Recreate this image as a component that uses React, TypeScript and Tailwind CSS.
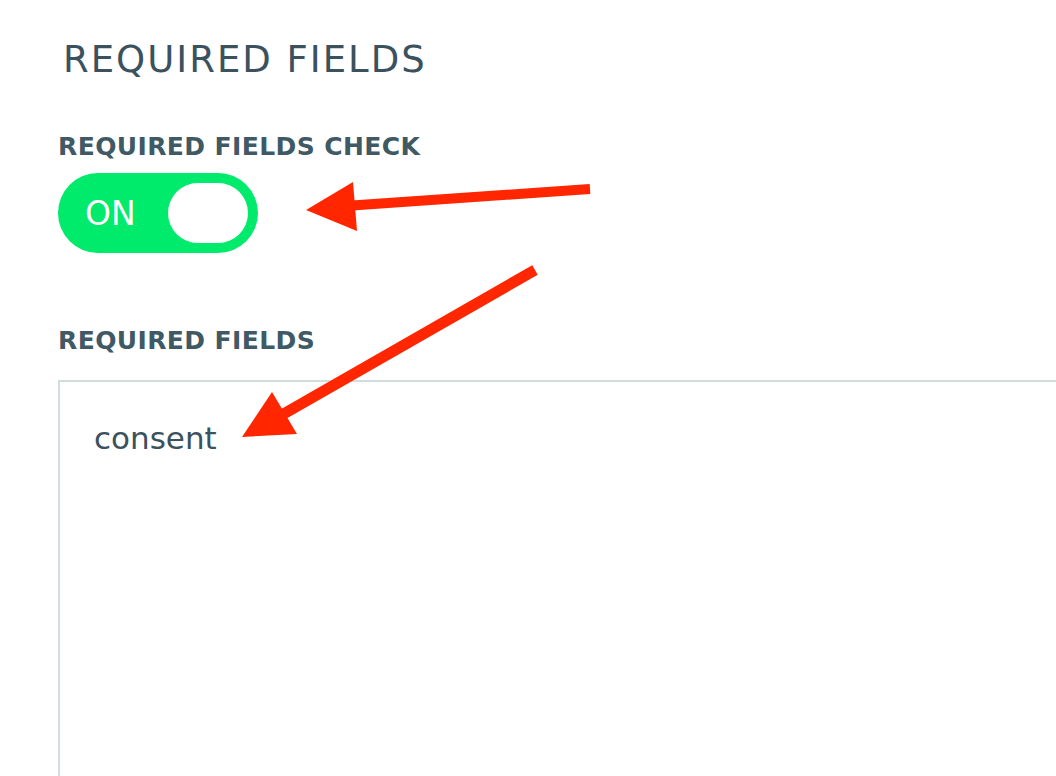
import React from "react";

const font = { fontFamily: '"DejaVu Sans", "Noto Sans", sans-serif' };

export default function App() {
  return (
    <div className="relative h-[776px] w-[1056px] overflow-hidden bg-white" style={font}>
      <div className="flex flex-col pl-[58px] pt-[38px]">
        <h1 className="pl-[5px] text-[37px] font-normal leading-[44px] tracking-[2px] text-[#3b525e]">
          REQUIRED FIELDS
        </h1>
        <div className="mt-[49px] text-[25px] font-bold leading-[32px] tracking-[0.4px] text-[#3f5965]">
          REQUIRED FIELDS CHECK
        </div>
        <div className="mt-[10px] flex h-[80px] w-[200px] items-center justify-between rounded-full bg-[#00ea6b] pl-[27px] pr-[10px]">
          <span className="text-[33px] leading-none text-white">ON</span>
          <span className="h-[60px] w-[80px] rounded-full bg-white" />
        </div>
        <div className="mt-[72px] text-[25px] font-bold leading-[32px] tracking-[0.4px] text-[#3f5965]">
          REQUIRED FIELDS
        </div>
        <div className="mt-[23px] h-[420px] w-[1100px] border-l-2 border-t-2 border-[#d3dde0] pl-[34px] pt-[38px]">
          <span className="text-[31px] leading-[36px] text-[#3b525e]">consent</span>
        </div>
      </div>
      <svg
        className="pointer-events-none absolute left-0 top-0"
        width="1056"
        height="776"
        viewBox="0 0 1056 776"
      >
        <line x1="590" y1="189" x2="345" y2="206" stroke="#ff2600" strokeWidth="10" />
        <polygon points="306,210 353,182 357,231" fill="#ff2600" />
        <line x1="535" y1="270" x2="280" y2="416" stroke="#ff2600" strokeWidth="11" />
        <polygon points="242,437 272,392 297,434" fill="#ff2600" />
      </svg>
    </div>
  );
}
